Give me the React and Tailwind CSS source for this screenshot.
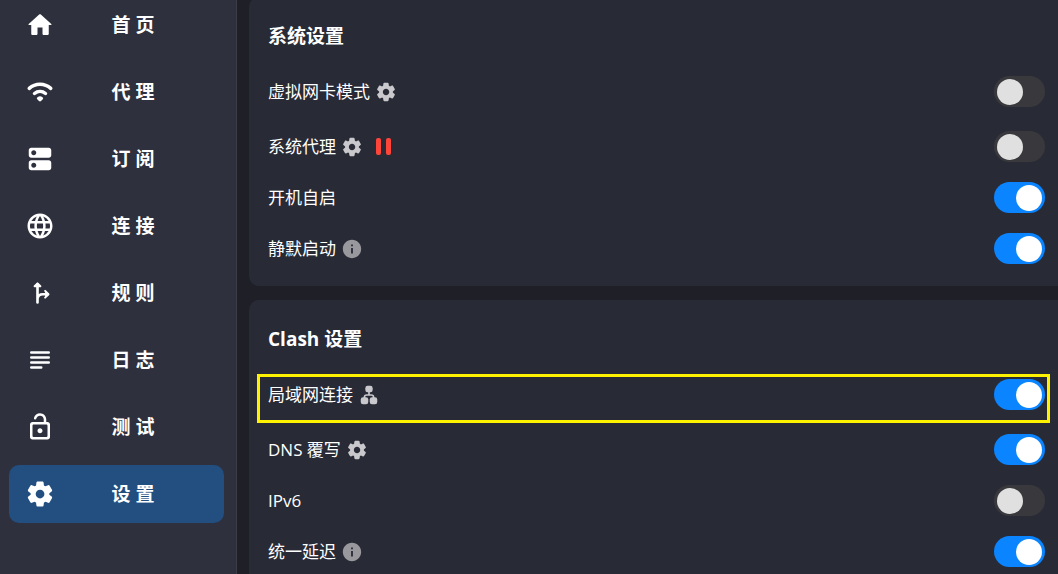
import clsx from "clsx";
import { useState } from "react";
import { MdInfo, MdLanguage } from "react-icons/md";

const Svg = ({ children, className = "size-[30px]" }) => (
  <svg viewBox="0 0 24 24" fill="currentColor" className={className} aria-hidden="true">
    {children}
  </svg>
);

const HomeIcon = () => (
  <Svg>
    <path d="M10 19v-5h4v5c0 .55.45 1 1 1h3c.55 0 1-.45 1-1v-7h1.7c.46 0 .68-.57.33-.87L12.67 3.6c-.38-.34-.96-.34-1.34 0l-8.36 7.53c-.34.3-.13.87.33.87H5v7c0 .55.45 1 1 1h3c.55 0 1-.45 1-1z" />
  </Svg>
);

const WifiIcon = () => (
  <Svg>
    <path d="M3.4 9.1a12.9 12.9 0 0 1 17.2 0M7.6 13.2a7 7 0 0 1 8.8 0" fill="none" stroke="currentColor" strokeWidth="2.8" strokeLinecap="round" />
    <path d="M10 16.1a3.5 3.5 0 0 1 4 0c.6.4.7 1.1.2 1.6l-1.4 1.5c-.4.5-1.2.5-1.6 0l-1.4-1.5c-.5-.5-.4-1.2.2-1.6z" />
  </Svg>
);

const DnsIcon = () => (
  <Svg>
    <path
      fillRule="evenodd"
      d="M19 13H5c-1.1 0-2 .9-2 2v4c0 1.1.9 2 2 2h14c1.1 0 2-.9 2-2v-4c0-1.1-.9-2-2-2zM7 19c-1.1 0-2-.9-2-2s.9-2 2-2 2 .9 2 2-.9 2-2 2zM19 3H5c-1.1 0-2 .9-2 2v4c0 1.1.9 2 2 2h14c1.1 0 2-.9 2-2V5c0-1.1-.9-2-2-2zM7 9c-1.1 0-2-.9-2-2s.9-2 2-2 2 .9 2 2-.9 2-2 2z"
    />
  </Svg>
);

const ForkIcon = () => (
  <Svg>
    <path
      d="M10 19.6V5M10 16.4c.5-2.2 1.9-3.4 4.2-3.4H18"
      fill="none"
      stroke="currentColor"
      strokeWidth="2.1"
      strokeLinecap="round"
    />
    <path
      d="M7.7 6.6L10 4.3l2.3 2.3zM16.1 10.3l2.7 2.7-2.7 2.7"
      stroke="currentColor"
      strokeWidth="1.6"
      strokeLinecap="round"
      strokeLinejoin="round"
    />
  </Svg>
);

const SubjectIcon = () => (
  <Svg>
    <path d="M5 6h14M5 10h14M5 14h14M5 18h8" stroke="currentColor" strokeWidth="2" strokeLinecap="round" />
  </Svg>
);

const LockOpenIcon = () => (
  <Svg>
    <path d="M12 13c-1.1 0-2 .9-2 2s.9 2 2 2 2-.9 2-2-.9-2-2-2zm6-5h-1V6c0-2.76-2.24-5-5-5-2.28 0-4.27 1.54-4.84 3.75-.14.54.18 1.08.72 1.22.53.14 1.08-.18 1.22-.72C9.44 3.93 10.63 3 12 3c1.65 0 3 1.35 3 3v2H6c-1.1 0-2 .9-2 2v10c0 1.1.9 2 2 2h12c1.1 0 2-.9 2-2V10c0-1.1-.9-2-2-2zm0 11c0 .55-.45 1-1 1H7c-.55 0-1-.45-1-1v-8c0-.55.45-1 1-1h10c.55 0 1 .45 1 1v8z" />
  </Svg>
);

const SettingsIcon = ({ className }) => (
  <Svg className={className}>
    <path d="M19.5 12c0-.23-.01-.45-.03-.68l1.86-1.41c.4-.3.51-.86.26-1.3l-1.87-3.23c-.25-.44-.79-.62-1.25-.42l-2.15.91c-.37-.26-.76-.49-1.17-.68l-.29-2.31c-.06-.5-.49-.88-.99-.88h-3.73c-.51 0-.94.38-1 .88l-.29 2.31c-.41.19-.8.42-1.17.68l-2.15-.91c-.46-.2-1-.02-1.25.42L2.41 8.62c-.25.44-.14.99.26 1.3l1.86 1.41c-.02.22-.03.44-.03.67s.01.45.03.68l-1.86 1.41c-.4.3-.51.86-.26 1.3l1.87 3.23c.25.44.79.62 1.25.42l2.15-.91c.37.26.76.49 1.17.68l.29 2.31c.06.5.49.88.99.88h3.73c.5 0 .93-.38.99-.88l.29-2.31c.41-.19.8-.42 1.17-.68l2.15.91c.46.2 1 .02 1.25-.42l1.87-3.23c.25-.44.14-.99-.26-1.3l-1.86-1.41c.03-.23.04-.45.04-.68zm-7.46 3.5c-1.93 0-3.5-1.57-3.5-3.5s1.57-3.5 3.5-3.5 3.5 1.57 3.5 3.5-1.57 3.5-3.5 3.5z" />
  </Svg>
);

const LanIcon = ({ className }) => (
  <Svg className={className}>
    <path d="M12 8v4M7 16v-1.5c0-1.4 1.1-2.5 2.500-2.500h5c1.400 0 2.500 1.100 2.500 2.500V16" fill="none" stroke="currentColor" strokeWidth="1.800" />
    <rect x="8" y="2" width="8" height="7" rx="2.500" />
    <rect x="3" y="14.500" width="8.200" height="7.500" rx="2.500" />
    <rect x="12.800" y="14.500" width="8.200" height="7.500" rx="2.500" />
  </Svg>
);

const PauseIcon = () => (
  <svg viewBox="0 0 15 17" className="ml-[13px] h-[17px] w-[15px] text-[#ff453a]" fill="currentColor" role="img" aria-label="已暂停">
    <rect width="5" height="17" rx="2" />
    <rect x="10" width="5" height="17" rx="2" />
  </svg>
);

const navItems = [
  { id: "home", label: "首 页", icon: HomeIcon },
  { id: "proxies", label: "代 理", icon: WifiIcon },
  { id: "profiles", label: "订 阅", icon: DnsIcon },
  { id: "connections", label: "连 接", icon: () => <MdLanguage className="size-[30px]" /> },
  { id: "rules", label: "规 则", icon: ForkIcon },
  { id: "logs", label: "日 志", icon: SubjectIcon },
  { id: "test", label: "测 试", icon: LockOpenIcon },
  { id: "settings", label: "设 置", icon: SettingsIcon },
];

const sections = [
  {
    title: "系统设置",
    rows: [
      { id: "tun", label: "虚拟网卡模式", icon: "settings", on: false },
      { id: "proxy", label: "系统代理", icon: "settings", on: false, paused: true },
      { id: "autostart", label: "开机自启", on: true },
      { id: "silent", label: "静默启动", icon: "info", on: true },
    ],
  },
  {
    title: "Clash 设置",
    rows: [
      { id: "lan", label: "局域网连接", icon: "lan", on: true, marked: true },
      { id: "dns", label: "DNS 覆写", icon: "settings", on: true },
      { id: "ipv6", label: "IPv6", on: false },
      { id: "delay", label: "统一延迟", icon: "info", on: true },
    ],
  },
];

const rowIcons = {
  settings: <SettingsIcon className="size-[22px] text-[#c9c9cd]" />,
  lan: <LanIcon className="size-[22px] text-[#c9c9cd]" />,
  info: <MdInfo className="size-[22px] text-[#98989d]" />,
};

const SettingRow = ({ row }) => {
  const [on, setOn] = useState(row.on);

  return (
    <li className="relative flex h-[51px] items-center first:mb-1">
      <label htmlFor={row.id} className="text-[17px] leading-6">{row.label}</label>
      {row.icon && (
        <button type="button" className="ml-[5px]" aria-label={`${row.label} 选项`}>
          {rowIcons[row.icon]}
        </button>
      )}
      {row.paused && <PauseIcon />}
      <input
        id={row.id}
        type="checkbox"
        role="switch"
        checked={on}
        onChange={(e) => setOn(e.target.checked)}
        className="ml-auto flex h-[31px] w-[51px] shrink-0 appearance-none items-center rounded-full bg-[#39393d] px-[3px] before:block before:size-[26px] before:rounded-full before:bg-[#e0e0e0] checked:bg-[#0a84ff] checked:before:translate-x-[19px] checked:before:bg-white"
      />
      {row.marked && <span className="pointer-events-none absolute -right-[5px] -bottom-[3px] -left-[11px] top-[5px] border-3 border-[#fff200]" />}
    </li>
  );
};

const App = () => {
  const [active, setActive] = useState("settings");

  return (
    <div className="flex h-screen overflow-hidden bg-[#1f1f27] font-['Open_Sans','Noto_Sans_CJK_SC',sans-serif] text-white">
      <nav className="-mt-1 flex w-[237px] shrink-0 flex-col gap-[9px] border-r border-[#3b3c48] bg-[#2e303d] pr-3 pl-[9px]">
        {navItems.map(({ id, label, icon: Icon }) => (
          <a
            key={id}
            href={`#${id}`}
            onClick={() => setActive(id)}
            className={clsx("flex h-[58px] shrink-0 items-center rounded-[10px] pr-[13px] pl-4", active === id && "bg-[#224e80]")}
          >
            <Icon />
            <span className="flex-1 text-center text-[19px] leading-7 font-bold">{label}</span>
          </a>
        ))}
      </nav>
      <main className="-mt-[3px] flex min-w-0 flex-1 flex-col gap-[14px] pl-3">
        {sections.map((section) => (
          <section key={section.title} className="shrink-0 rounded-l-[10px] bg-[#282a36] pt-[23px] pr-[13px] pb-3 pl-[19px]">
            <h2 className="mb-[14px] text-[19px] leading-8 font-bold">{section.title}</h2>
            <ul>
              {section.rows.map((row) => (
                <SettingRow key={row.id} row={row} />
              ))}
            </ul>
          </section>
        ))}
      </main>
    </div>
  );
};

export default App;
